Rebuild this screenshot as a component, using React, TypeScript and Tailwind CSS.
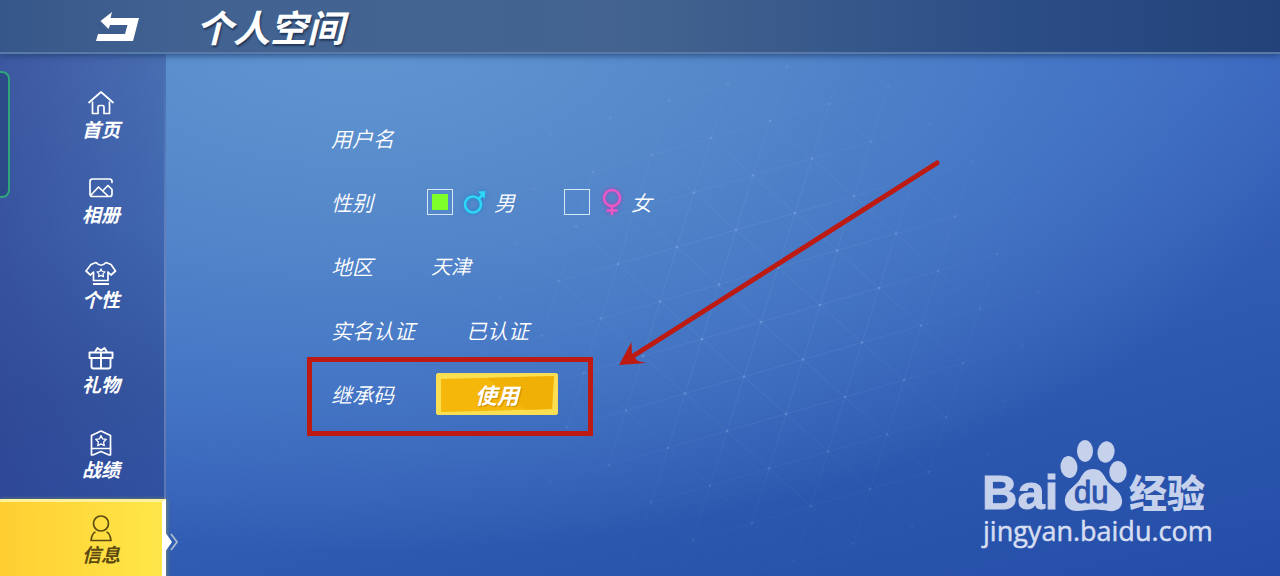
import React, { useState } from 'react'

const HomeIcon = () => (
  <svg viewBox="0 0 30 26" className="h-[26px] w-[30px]" fill="none" stroke="currentColor" strokeWidth="1.700" strokeLinejoin="round" strokeLinecap="round">
    <path d="M3 12.500 15 2l12 10.500" />
    <path d="M6.500 12v11.500h5.500v-6.500q0-1.500 1.500-1.500h3q1.500 0 1.500 1.500v6.500h5.500V12" />
  </svg>
)

const AlbumIcon = () => (
  <svg viewBox="0 0 30 26" className="h-[26px] w-[30px]" fill="none" stroke="currentColor" strokeWidth="1.700" strokeLinejoin="round" strokeLinecap="round">
    <path d="M26 7.500V6.500Q26 4 23.500 4H6.500Q4 4 4 6.500v12.500Q4 21.500 6.500 21.500h17q2.500 0 2.500-2.500V14.500L22 10.500 17.500 15" />
    <path d="m5 20 7.500-8 9.500 9" />
  </svg>
)

const ShirtIcon = () => (
  <svg viewBox="0 0 32 26" className="h-[26px] w-[32px]" fill="none" stroke="currentColor" strokeWidth="1.700" strokeLinejoin="round">
    <path d="M11 2.500q5 5.500 10 0l5 2 4.500 6.500-4.500 4-3-3v8.500H8.500V12l-3 3-4.500-4L6 4.500z" />
    <path d="m16 9 1.200 2.500 2.800.4-2 2 .5 2.800-2.500-1.300-2.500 1.300.5-2.800-2-2 2.800-.4z" strokeWidth="1.200" />
    <path d="M8 24h16" strokeWidth="2" />
  </svg>
)

const GiftIcon = () => (
  <svg viewBox="0 0 30 26" className="h-[26px] w-[30px]" fill="none" stroke="currentColor" strokeWidth="1.900" strokeLinejoin="round">
    <path d="M3.500 7.500h23v5.500h-23z" />
    <path d="M5.500 13v8.500q0 2 2 2h15q2 0 2-2V13M15 7.500v16" />
    <path d="m9 7 2.500-4 3.500 2.500L18.500 3 21 7" />
  </svg>
)

const RecordIcon = () => (
  <svg viewBox="0 0 30 28" className="h-[28px] w-[30px]" fill="none" stroke="currentColor" strokeWidth="1.700" strokeLinejoin="round">
    <path d="M5.500 19.500V6.500L15 2l9.500 4.500v13z" />
    <path d="M5.500 19.500V26l2-.2L15 22.500l7.500 3.300 2 .2v-6.500" />
    <path d="m15 6.500 1.600 3.400 3.700.5-2.700 2.600.7 3.700-3.300-1.800-3.300 1.800.7-3.700-2.700-2.600 3.700-.5z" strokeWidth="1.300" />
  </svg>
)

const UserIcon = () => (
  <svg viewBox="0 0 30 28" className="h-[28px] w-[30px]" fill="none" stroke="currentColor" strokeWidth="1.700" strokeLinejoin="round">
    <circle cx="15" cy="9.500" r="7.500" />
    <path d="M9.500 18q-3.500 1-4.500 8.500h20q-1-7.500-4.500-8.500" />
  </svg>
)

const menu = [
  { name: "首页", icon: <HomeIcon /> },
  { name: "相册", icon: <AlbumIcon /> },
  { name: "个性", icon: <ShirtIcon /> },
  { name: "礼物", icon: <GiftIcon /> },
  { name: "战绩", icon: <RecordIcon /> },
  { name: "信息", icon: <UserIcon /> },
]

// faint triangle mesh behind the form
const Mesh = () => {
  const point = (i: number, j: number) => [677 + 42 * i + 59 * j, 247 + 37.5 * i - 17 * j]
  const range = Array.from({ length: 25 }, (_, n) => n - 12)

  const line = (key: string, a: number[], b: number[]) => (
    <line key={key} x1={a[0]} y1={a[1]} x2={b[0]} y2={b[1]} />
  )

  return (
    <svg aria-hidden="true" viewBox="0 0 1280 576" className="pointer-events-none absolute top-0 left-0 h-[576px] w-[1280px]">
      <defs>
        <radialGradient id="meshFade" gradientUnits="userSpaceOnUse" cx="760" cy="300" r="320">
          <stop offset="0.300" stopColor="#fff" />
          <stop offset="1" stopColor="#000" />
        </radialGradient>
        <mask id="meshMask" maskUnits="userSpaceOnUse" x="0" y="0" width="1280" height="576">
          <rect x="166" y="54" width="1114" height="522" fill="url(#meshFade)" />
        </mask>
      </defs>
      <g mask="url(#meshMask)">
        <g stroke="#a9c8f5" strokeOpacity="0.110" strokeWidth="1">
          {range.map((n) => line(`a${n}`, point(-12, n), point(12, n)))}
          {range.map((n) => line(`b${n}`, point(n, -12), point(n, 12)))}
          {range.map((n) => line(`c${n}`, point(n + 12, -12), point(n - 12, 12)))}
        </g>
        <g fill="#b9d6ff" fillOpacity="0.220">
          {range.map((i) => range.map((j) => {
            const [x, y] = point(i, j)
            return <circle key={`${i}_${j}`} cx={x} cy={y} r="1.300" />
          }))}
        </g>
      </g>
    </svg>
  )
}

const Watermark = () => (
  <svg role="img" aria-label="Baidu" viewBox="0 0 240 120" className="pointer-events-none absolute right-[62px] bottom-5 h-[120px] w-[240px]">
    <g fill="#c6d1ec">
      <text x="4" y="73" fontSize="49" fontWeight="700" fontFamily="'Liberation Sans', Arial, sans-serif" stroke="#c6d1ec" strokeWidth="1">Bai</text>
      <ellipse cx="91" cy="31" rx="8.500" ry="11" transform="rotate(-6 91 31)" />
      <ellipse cx="107" cy="15" rx="8" ry="11" />
      <ellipse cx="128" cy="16" rx="8.500" ry="10.700" transform="rotate(12 128 16)" />
      <ellipse cx="140" cy="36" rx="8.700" ry="11" />
      <path d="M115 33c7 0 10 4 13 10 4 7 15 11 16 21 1 8-6 12-13 11-6-1-10-1.500-16-1.500S105 75 99 75c-8 0-13-5-12-12 1-9 11-13 15-20 3-6 6-10 13-10z" />
      <text x="151" y="71" fontSize="38" fontWeight="900" fontFamily="'Noto Sans CJK SC', sans-serif">经验</text>
    </g>
    <text x="96" y="67" fontSize="31" fontWeight="400" fontFamily="'Liberation Sans', Arial, sans-serif" fill="#2d55ae" stroke="#2d55ae" strokeWidth="1">du</text>
    <text x="5" y="105" fontSize="27" fontFamily="'Open Sans', 'Noto Sans', sans-serif" fill="#d6def2" stroke="#d6def2" strokeWidth="0.500">jingyan.baidu.com</text>
  </svg>
)

const MaleIcon = () => (
  <svg aria-hidden="true" viewBox="0 0 24 26" className="h-[26px] w-[24px] drop-shadow-[0_0_2px_#1c7fd0]" fill="none" stroke="#2cd8f6" strokeWidth="2.600">
    <circle cx="10" cy="15.500" r="8" />
    <path d="m15.500 10 5-5" />
    <path d="M15 2.500 22.500 2l-1 8z" fill="#2cd8f6" stroke="none" />
  </svg>
)

const FemaleIcon = () => (
  <svg aria-hidden="true" viewBox="0 0 22 28" className="h-[28px] w-[22px] drop-shadow-[0_0_2px_#a040b8]" fill="none" stroke="#ea58c4" strokeWidth="2.500">
    <circle cx="11" cy="10" r="8" />
    <path d="M11 18v9M5.500 22.500h11" />
  </svg>
)

const box = "h-[26px] w-[26px] appearance-none border border-[#d5e8fa] bg-clip-content p-1 checked:bg-[#7dff29]"

const App = () => {

  const [active, setActive] = useState("信息")
  const [gender, setGender] = useState("male")

  return (
    <div className="relative flex h-screen flex-col overflow-hidden bg-[radial-gradient(ellipse_78%_92%_at_28%_4%,#6296d2_0%,#5689ca_35%,rgba(74,125,200,0.800)_65%,rgba(64,112,196,0)_100%),linear-gradient(165deg,#4676cc_5%,#3e6bc4_35%,#345eb6_60%,#2a55ac_82%,#244da8_100%)] font-['Noto_Sans_CJK_SC',sans-serif] text-white italic">
      <Mesh />

      {/* header */}
      <header className="relative z-10 flex h-[54px] shrink-0 items-center border-b-2 border-[#587aa8] bg-[linear-gradient(90deg,#365789_0%,#426392_16%,#44648f_48%,#2b4d86_80%,#234279_100%)] pl-[94px] shadow-[0_2px_6px_rgba(30,60,110,0.700)]">
        <button type="button" aria-label="返回" className="cursor-pointer">
          <svg viewBox="0 0 46 34" className="h-[34px] w-[46px]" fill="#fff">
            <path d="M6.500 12 18 3l-1.500 6H45l-6 23H2l2-7h27l2.500-9H16l-1.500 4z" />
          </svg>
        </button>
        <h1 className="ml-14 text-[37px] leading-[52px] font-bold [text-shadow:1px_2px_2px_rgba(20,35,65,0.700)]">个人空间</h1>
      </header>

      <div className="relative flex min-h-0 flex-1">
        {/* side menu */}
        <nav className="relative w-[166px] shrink-0 bg-[linear-gradient(90deg,rgba(45,60,140,0.450),rgba(50,80,170,0)),linear-gradient(175deg,#4a6fb2_0%,#4067b0_35%,#34569f_65%,#2c4da3_100%)] pt-5">
          <div className="absolute top-[17px] left-0 h-[127px] w-[10px] rounded-r-lg border-2 border-l-0 border-[#2fa57c] bg-[#2c4a88]" />
          <div className="absolute top-0 right-0 h-full w-[2px] bg-linear-to-b from-white/0 via-white/25 to-white/20" />
          {menu.map((item) => (
            <button
              key={item.name}
              type="button"
              onClick={() => setActive(item.name)}
              className={active === item.name
                ? "relative flex h-[85px] w-full cursor-pointer flex-col items-center border-t-[3px] border-r-4 border-t-[#fff29a] border-r-white bg-linear-to-r from-[#ffce31] to-[#ffe749] pt-[13px] pl-10 text-[#5c4a10] shadow-[1px_0_4px_rgba(120,140,110,0.900)]"
                : "relative flex h-[85px] w-full cursor-pointer flex-col items-center pt-4 pl-9"}
            >
              <span className="flex h-[26px] items-center">{item.icon}</span>
              <span className="text-[19px] leading-[26px] font-bold">{item.name}</span>
              {active === item.name && (
                <svg aria-hidden="true" viewBox="0 0 14 24" className="absolute top-[28px] -right-[17px] h-[24px] w-[14px]">
                  <path d="M0 2v20l7-10z" fill="#fff" />
                  <path d="m6 4 6 8-6 8" fill="none" stroke="#a9bcd0" strokeWidth="1.800" />
                </svg>
              )}
            </button>
          ))}
        </nav>

        {/* profile form */}
        <main className="relative flex-1 pt-[52px] pl-[165px] text-[21px] leading-8 font-[350]">
          <div className="flex h-16 items-center">用户名</div>

          <fieldset className="flex h-16 items-center">
            <legend className="float-left">性别</legend>
            <label className="ml-[54px] flex items-center">
              <input type="radio" name="gender" className={box} checked={gender === "male"} onChange={() => setGender("male")} />
              <span className="mr-[7px] ml-[10px]"><MaleIcon /></span>
              男
            </label>
            <label className="ml-[49px] flex items-center">
              <input type="radio" name="gender" className={box} checked={gender === "female"} onChange={() => setGender("female")} />
              <span className="mr-2 ml-[11px]"><FemaleIcon /></span>
              女
            </label>
          </fieldset>

          <div className="flex h-16 items-center">
            <span>地区</span>
            <span className="ml-[58px] text-[20px]">天津</span>
          </div>

          <div className="flex h-16 items-center">
            <span>实名认证</span>
            <span className="ml-[51px]">已认证</span>
          </div>

          <div className="relative flex h-16 items-center">
            <span>继承码</span>
            <button type="button" className="relative ml-[42px] h-[42px] w-[122px] cursor-pointer rounded-[2px] border border-[#f7dc58] bg-[#fbdf52] text-[22px] font-bold italic">
              <svg aria-hidden="true" viewBox="0 0 120 40" className="absolute inset-0 h-full w-full">
                <path d="m4 5 113-3-2 33L4 38z" fill="#f5b70a" />
                <path d="m50 4 67-2-2 33-25 1z" fill="#eea900" opacity="0.500" />
              </svg>
              <span className="relative [text-shadow:1px_1px_1px_rgba(170,110,0,0.600)]">使用</span>
            </button>
            <div className="pointer-events-none absolute -top-[5px] -left-6 h-[79px] w-[286px] border-[5px] border-[#bd1a12]" />
          </div>

          {/* pointer to the code row */}
          <svg aria-hidden="true" viewBox="0 0 326 210" className="pointer-events-none absolute top-[104px] left-[450px] h-[210px] w-[326px]">
            <path d="M14 200 321 5" stroke="#bd1a12" strokeWidth="5" strokeLinecap="round" />
            <path d="M3 207 15.500 184l.5 13 6 6 8 2z" fill="#bd1a12" />
          </svg>
        </main>
      </div>

      <div className="not-italic"><Watermark /></div>
    </div>
  )
}

export default App
